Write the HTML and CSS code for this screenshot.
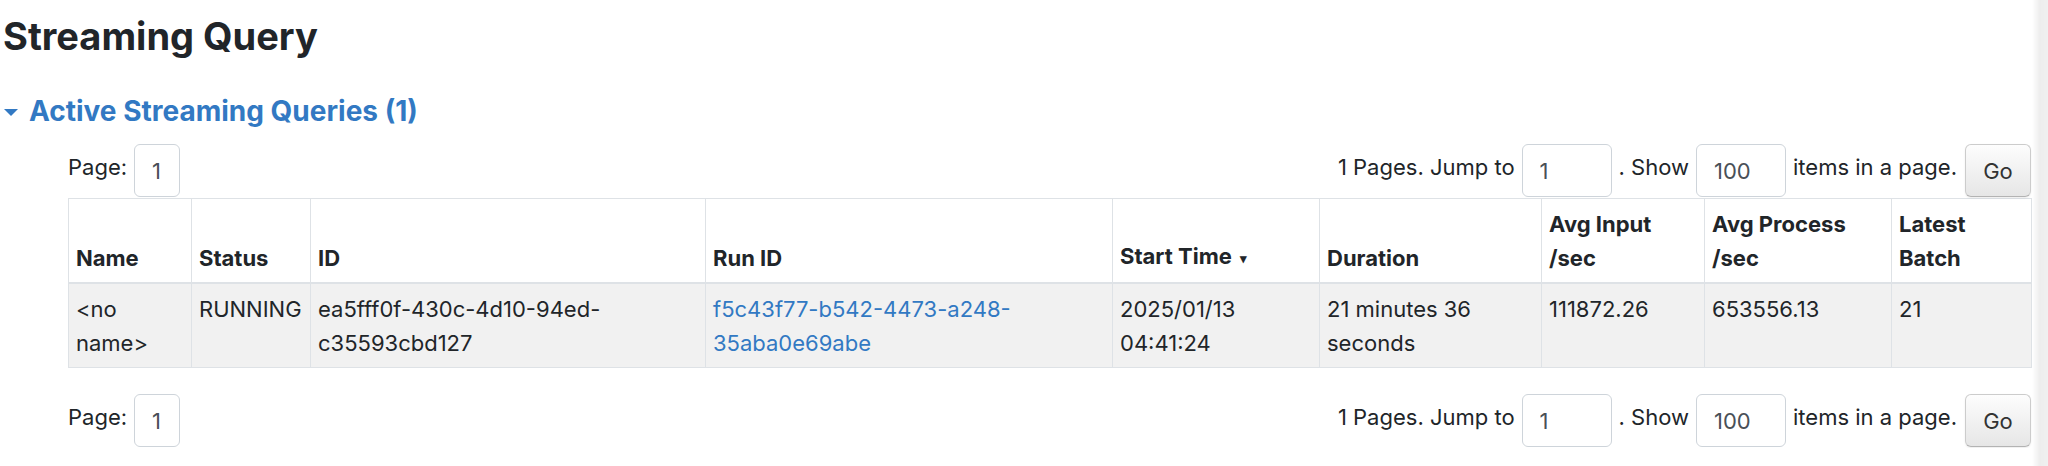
FILE: index.html
```
<!DOCTYPE html>
<html lang="en">
<head>
  <meta charset="UTF-8" />
  <meta name="viewport" content="width=device-width, initial-scale=1.0"/>
  <title>Streaming Query</title>
  <link rel="stylesheet" href="styles.css">
</head>
<body>

  <div class="page">
    <h3 class="page-title">Streaming Query</h3>

    <!-- Active queries -->
    <h4 class="collapse-header">
      <span class="arrow-open"></span>
      <a href="#">Active Streaming Queries (1)</a>
    </h4>

    <div class="aggregated">
      <form class="page-form">
        <div class="page-left">
          <label>Page:</label>
          <input type="text" class="form-control page-box" value="1" />
        </div>
        <div class="page-right">
          <label>1 Pages. Jump to</label>
          <input type="text" class="form-control jump-box" value="1" />
          <label>. Show</label>
          <input type="text" class="form-control size-box" value="100" />
          <label>items in a page.</label>
          <button type="submit" class="btn-go">Go</button>
        </div>
      </form>

      <table class="query-table">
        <thead>
          <tr>
            <th class="col-name">Name</th>
            <th class="col-status">Status</th>
            <th class="col-id">ID</th>
            <th class="col-runid">Run ID</th>
            <th class="col-start">Start Time <span class="sort-arrow">&#9662;</span></th>
            <th class="col-duration">Duration</th>
            <th class="col-input">Avg Input /sec</th>
            <th class="col-process">Avg Process /sec</th>
            <th class="col-batch">Latest Batch</th>
          </tr>
        </thead>
        <tbody>
          <tr>
            <td>&lt;no name&gt;</td>
            <td>RUNNING</td>
            <td>ea5fff0f-430c-4d10-94ed-c35593cbd127</td>
            <td><a href="#">f5c43f77-b542-4473-a248-35aba0e69abe</a></td>
            <td>2025/01/13 04:41:24</td>
            <td>21 minutes 36 seconds</td>
            <td>111872.26</td>
            <td>653556.13</td>
            <td>21</td>
          </tr>
        </tbody>
      </table>

      <form class="page-form bottom-form">
        <div class="page-left">
          <label>Page:</label>
          <input type="text" class="form-control page-box" value="1" />
        </div>
        <div class="page-right">
          <label>1 Pages. Jump to</label>
          <input type="text" class="form-control jump-box" value="1" />
          <label>. Show</label>
          <input type="text" class="form-control size-box" value="100" />
          <label>items in a page.</label>
          <button type="submit" class="btn-go">Go</button>
        </div>
      </form>
    </div>
  </div>

  <div class="edge-shadow"></div>

</body>
</html>
```

FILE: styles.css
```
* {
  box-sizing: border-box;
}

body {
  font-family: Inter, 'Liberation Sans', sans-serif;
  font-size: 22px;
  line-height: 34px;
  color: #212529;
  background: #ffffff;
  margin: 0;
}

a {
  color: #3279c3;
  text-decoration: none;
}

.page {
  padding: 13px 17px 0 3px;
}

.page-title {
  font-size: 38px;
  line-height: 46px;
  font-weight: 700;
  margin: 0;
  color: #212529;
}

.collapse-header {
  display: flex;
  align-items: center;
  font-size: 28px;
  line-height: 40px;
  font-weight: 700;
  margin: 32px 0 0;
}

.collapse-header a {
  color: #3279c3;
}

.arrow-open {
  width: 0;
  height: 0;
  border-left: 7px solid transparent;
  border-right: 7px solid transparent;
  border-top: 7px solid #3279c3;
  margin: 2px 11px 0 1px;
}

.aggregated {
  margin-left: 65px;
  padding-top: 13px;
}

.page-form {
  display: flex;
  justify-content: space-between;
  align-items: center;
  height: 53px;
  margin: 0 0 1px;
}

.page-left, .page-right {
  display: flex;
  align-items: center;
  gap: 7px;
}

.page-form label {
  padding-bottom: 7px;
}

.form-control {
  height: 53px;
  padding: 0 0 0 17px;
  border: 1px solid #ced4da;
  border-radius: 6px;
  font-family: inherit;
  font-size: 22px;
  color: #495057;
  background: #ffffff;
}

.page-box {
  width: 46px;
}

.jump-box, .size-box {
  width: 90px;
}

.btn-go {
  height: 53px;
  width: 66px;
  margin-left: 1px;
  font-family: inherit;
  font-size: 22px;
  color: #333333;
  background: linear-gradient(#fdfdfd, #e6e6e6);
  border: 1px solid #cccccc;
  border-bottom-color: #b3b3b3;
  border-radius: 6px;
  box-shadow: 0 1px 2px rgba(0, 0, 0, 0.08);
}

.query-table {
  width: 100%;
  table-layout: fixed;
  border-collapse: collapse;
}

.query-table th, .query-table td {
  border: 1px solid #dee2e6;
  padding: 7.5px 7px;
  text-align: left;
}

.query-table th {
  vertical-align: bottom;
  font-weight: 700;
  border-bottom: 2px solid #dee2e6;
}

.query-table td {
  vertical-align: top;
  background: #f1f1f1;
}

.sort-arrow {
  font-size: 13px;
  vertical-align: 1px;
  margin-left: 3px;
}

.col-name { width: 123px; }
.col-status { width: 119px; }
.col-id { width: 395px; }
.col-runid { width: 407px; }
.col-start { width: 207px; }
.col-duration { width: 222px; }
.col-input { width: 163px; }
.col-process { width: 187px; }
.col-batch { width: 140px; }

.bottom-form {
  margin-top: 26px;
}

.edge-shadow {
  position: fixed;
  top: 0;
  right: 0;
  width: 16px;
  height: 100%;
  background: linear-gradient(to right, rgba(0, 0, 0, 0), rgba(0, 0, 0, 0.07) 50%, rgba(0, 0, 0, 0.06));
}
```
